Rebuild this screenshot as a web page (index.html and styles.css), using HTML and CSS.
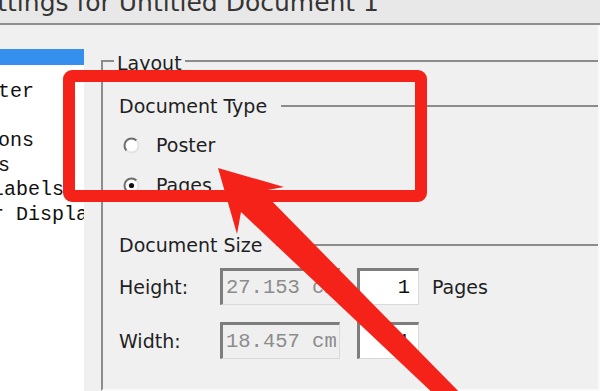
FILE: index.html
```html
<!DOCTYPE html>
<html lang="en">
<head>
    <meta charset="UTF-8">
    <title>Settings for Untitled Document 1</title>
    <link rel="stylesheet" href="styles.css">
</head>
<body>

<!-- Title bar -->
<div class="titlebar">
    <div class="titlebar-text">Settings for Untitled Document 1</div>
</div>

<div class="main">
    <!-- Category tree -->
    <div class="sidebar">
        <div class="tree">
            <div class="tree-sel"></div>
            <ul class="tree-list">
                <li>  Poster</li>
                <li> </li>
                <li> Options</li>
                <li> Tools</li>
                <li class="sub">    Labels</li>
                <li class="sub">Ruler Display</li>
            </ul>
        </div>
    </div>

    <!-- Layout page -->
    <div class="content">
        <div class="group">
            <div class="group-title">Layout</div>
            <div class="group-body">
                <div class="section-head">Document Type</div>

                <label class="radio-row">
                    <svg class="radio" viewBox="0 0 17 17" width="17" height="17">
                        <circle cx="8.5" cy="8.5" r="7" fill="#fff"/>
                        <path d="M3.55 13.45 A7 7 0 0 1 13.45 3.55" fill="none" stroke="#6f6f6f" stroke-width="2"/>
                        <path d="M13.45 3.55 A7 7 0 0 1 3.55 13.45" fill="none" stroke="#e4e4e4" stroke-width="2"/>
                    </svg>
                    <span>Poster</span>
                </label>
                <label class="radio-row">
                    <svg class="radio" viewBox="0 0 17 17" width="17" height="17">
                        <circle cx="8.5" cy="8.5" r="7" fill="#fff"/>
                        <path d="M3.55 13.45 A7 7 0 0 1 13.45 3.55" fill="none" stroke="#6f6f6f" stroke-width="2"/>
                        <path d="M13.45 3.55 A7 7 0 0 1 3.55 13.45" fill="none" stroke="#e4e4e4" stroke-width="2"/>
                        <circle cx="8.5" cy="8.5" r="2.6" fill="#111"/>
                    </svg>
                    <span>Pages</span>
                </label>

                <div class="section-head size-head">Document Size</div>

                <div class="field-row">
                    <span class="field-label">Height:</span>
                    <div class="box box-wide">27.153 cm</div>
                    <div class="box box-num">1</div>
                    <span class="unit">Pages</span>
                </div>
                <div class="field-row field-row-2">
                    <span class="field-label">Width:</span>
                    <div class="box box-wide">18.457 cm</div>
                    <div class="box box-num">1</div>
                </div>
            </div>
        </div>
    </div>
</div>

<!-- Red annotation -->
<div class="callout"></div>
<svg class="arrow" width="600" height="391" viewBox="0 0 600 391">
    <polygon points="218,168 237,234 241,212 456,415 469,402 262,191 284,187" fill="#f5221a"/>
</svg>

</body>
</html>
```

FILE: styles.css
```css
body, html {
    margin: 0;
    padding: 0;
}

body {
    position: relative;
    width: 600px;
    height: 391px;
    overflow: hidden;
    background-color: #f0f0f0;
    font-family: "DejaVu Sans", sans-serif;
    color: #1f1f1f;
}

/* Title bar */
.titlebar {
    height: 23px;
    overflow: hidden;
    background-color: #e8e8e8;
    border-bottom: 2px solid #8e8e8e;
}

.titlebar-text {
    font-size: 25px;
    margin-top: -12px;
    margin-left: -34px;
    white-space: nowrap;
    color: #353535;
}

.main {
    display: flex;
    height: 366px;
}

/* Category tree */
.sidebar {
    width: 84px;
    padding-top: 24px;
    box-sizing: border-box;
}

.tree {
    height: 100%;
    background-color: #fff;
    overflow: hidden;
    border-bottom: 2px solid #fff;
}

.tree-sel {
    height: 16px;
    background-color: #3490ec;
}

.tree-list {
    list-style: none;
    margin: 15px 0 0 -62px;
    padding: 0;
    font-family: "Liberation Mono", monospace;
    font-size: 20px;
    line-height: 24.5px;
    color: #111;
}

.tree-list li {
    height: 24.5px;
    white-space: pre;
}

.tree-list li.sub {
    margin-left: 6px;
}

/* Layout page */
.content {
    flex: 1;
    display: flex;
    flex-direction: column;
    margin-left: 17px;
    padding-top: 35px;
    border-right: 2px solid #fafafa;
}

.group {
    flex: 1;
    border-top: 2px solid #8c8c8c;
    border-left: 2px solid #8c8c8c;
    border-bottom: 2px solid #fafafa;
}

.group-title {
    width: fit-content;
    margin: -10px 0 0 11px;
    padding: 0 3px;
    background-color: #f0f0f0;
    font-size: 19px;
    line-height: 22px;
}

.group-body {
    padding-left: 16px;
    font-size: 19px;
    line-height: 22px;
}

.section-head {
    display: flex;
    align-items: center;
    gap: 14px;
    margin-top: 21px;
    white-space: nowrap;
}

.section-head::after {
    content: "";
    flex: 1;
    border-top: 2px solid #8c8c8c;
}

.size-head {
    margin-top: 29px;
}

.radio-row {
    display: flex;
    align-items: center;
    height: 40px;
}

.radio-row:first-of-type {
    margin-top: 8px;
}

.radio {
    margin-left: 4px;
    margin-right: 16px;
}

.field-row {
    display: flex;
    align-items: center;
    height: 37px;
    margin-top: 12px;
}

.field-row-2 {
    margin-top: 17px;
}

.field-label {
    width: 101px;
}

.box {
    display: flex;
    align-items: center;
    box-sizing: border-box;
    height: 37px;
    border-style: solid;
    border-width: 3px 1px 1px 3px;
    border-color: #7d7d7d #d9d9d9 #d9d9d9 #7d7d7d;
    font-family: "Liberation Mono", monospace;
    font-size: 20.5px;
    white-space: nowrap;
    overflow: hidden;
}

.box-wide {
    width: 120px;
    padding-left: 3px;
    color: #8c8c8c;
    background-color: #efefef;
}

.box-num {
    width: 62px;
    margin-left: 17px;
    justify-content: flex-end;
    padding-right: 8px;
    color: #111;
    background-color: #fff;
}

.unit {
    margin-left: 13px;
}

/* Red annotation */
.callout {
    position: absolute;
    left: 63px;
    top: 70px;
    width: 364px;
    height: 132px;
    box-sizing: border-box;
    border: 12px solid #f5221a;
    border-radius: 9px;
}

.arrow {
    position: absolute;
    left: 0;
    top: 0;
}
```
